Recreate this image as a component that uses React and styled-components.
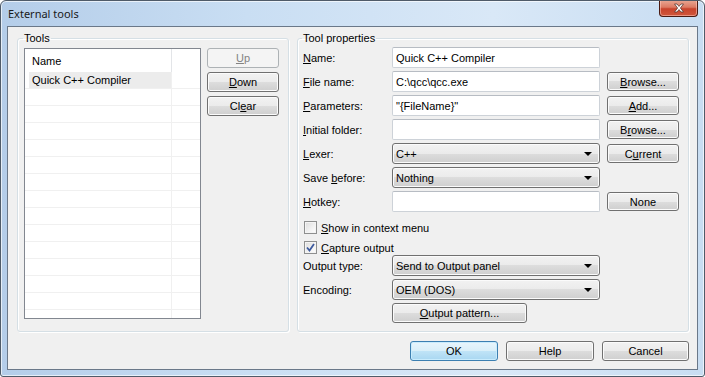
import React from 'react'
import styled, { createGlobalStyle, css } from 'styled-components'

const GlobalStyle = createGlobalStyle`
  html, body {
    margin: 0;
    padding: 0;
    background: #ffffff;
  }
  body {
    font-family: "Liberation Sans", Arial, sans-serif;
    font-size: 11px;
    color: #000;
  }
  #root {
    width: 705px;
    height: 377px;
  }
`

const Window = styled.div`
  width: 705px;
  height: 377px;
  box-sizing: border-box;
  border: 1px solid #4f5b69;
  border-radius: 6px 6px 3px 3px;
  background: linear-gradient(90deg, #b4cde9 0%, #c9def3 35%, #d9e8f7 70%, #c8ddf2 100%);
  box-shadow: inset 0 0 0 1px rgba(255, 255, 255, 0.65);
  display: flex;
  flex-direction: column;
  overflow: hidden;
`

const TitleBar = styled.div`
  height: 25px;
  display: flex;
  align-items: flex-start;
  padding: 0 6px 0 7px;
`

const Title = styled.div`
  flex: 1;
  font-family: "Noto Sans", "Open Sans", sans-serif;
  font-size: 11px;
  line-height: 16px;
  padding-top: 5px;
  color: #1a1a1a;
`

const CloseButton = styled.div`
  width: 39px;
  height: 17px;
  margin-top: -1px;
  box-sizing: border-box;
  border: 1px solid #4a1a12;
  border-top: none;
  border-radius: 0 0 4px 4px;
  background: linear-gradient(#e9a995 0%, #dc7a63 45%, #c8432c 55%, #d0573c 100%);
  box-shadow: inset 0 0 0 1px rgba(255, 200, 190, 0.55);
  display: flex;
  align-items: center;
  justify-content: center;
`

const Client = styled.div`
  flex: 1;
  margin: 0 6px 6px 6px;
  border: 1px solid #6a7889;
  background: #f0f0f0;
  display: flex;
  flex-direction: column;
  padding: 5px 8px 8px 9px;
`

const Groups = styled.div`
  height: 300px;
  display: flex;
  gap: 8px;
`

const GroupBox = styled.fieldset`
  margin: 0;
  box-sizing: border-box;
  width: ${p => p.$width}px;
  min-width: 0;
  border: 1px solid #d5dfe5;
  border-radius: 3px;
  box-shadow: inset 1px 1px 0 #ffffff, 1px 1px 0 #ffffff;
  padding: ${p => p.$pad};
`

const Legend = styled.legend`
  padding: 0 1px;
  margin-left: -1px;
  line-height: 13px;
  font-size: 11px;
`

const ToolsBody = styled.div`
  display: flex;
  gap: 6px;
  align-items: flex-start;
`

const ListBox = styled.div`
  width: 177px;
  height: 271px;
  box-sizing: border-box;
  border: 1px solid #828790;
  background: #ffffff;
  overflow: hidden;
`

const ListRow = styled.div`
  display: grid;
  grid-template-columns: 147px 1fr;
  height: ${p => (p.$header ? 23 : 17)}px;
  box-sizing: border-box;
  border-bottom: ${p => (p.$header ? 'none' : '1px solid #f0f0f0')};
`

const ListCell = styled.div`
  display: flex;
  align-items: center;
  border-right: ${p => (p.$first ? `1px solid ${p.$header ? '#e3e5e8' : '#f0f0f0'}` : 'none')};
  background: ${p => (p.$selected ? '#ececec' : 'transparent')};
  margin-left: ${p => (p.$selected ? 4 : 0)}px;
  padding-left: ${p => (p.$selected ? 3 : p.$first ? 7 : 0)}px;
  white-space: nowrap;
`

const ButtonColumn = styled.div`
  display: flex;
  flex-direction: column;
  gap: 4px;
`

const Button = styled.button`
  box-sizing: border-box;
  width: ${p => p.$w || 72}px;
  height: ${p => p.$h || 20}px;
  padding: 0;
  margin: 0;
  font: inherit;
  color: #000;
  border: 1px solid #707070;
  border-radius: 3px;
  background: linear-gradient(#f2f2f2 0%, #ebebeb 50%, #dddddd 50%, #cfcfcf 100%);
  box-shadow: inset 0 0 0 1px #fbfbfb;
  ${p => p.$disabled && css`
    color: #838383;
    border-color: #adb2b5;
    background: #f4f4f4;
    box-shadow: none;
  `}
  ${p => p.$default && css`
    border-color: #3c7fb1;
    background: linear-gradient(#e8f5fc 0%, #d9eff9 50%, #c0e4f7 50%, #a9d7f1 100%);
    box-shadow: inset 0 0 0 1px #c9ecfd;
  `}
`

const PropsBody = styled.div`
  display: flex;
  flex-direction: column;
`

const FormRow = styled.div`
  display: grid;
  grid-template-columns: 82px 208px 72px;
  column-gap: 7px;
  align-items: center;
  height: ${p => p.$h || 21}px;
  margin-top: ${p => p.$mt ?? 3}px;
`

const Label = styled.span`
  white-space: nowrap;
`

const TextBox = styled.div`
  box-sizing: border-box;
  height: 21px;
  border: 1px solid #cdd2d8;
  border-top-color: #b7bcc3;
  border-radius: 2px;
  background: #ffffff;
  display: flex;
  align-items: center;
  padding-left: 3px;
  white-space: nowrap;
`

const Combo = styled.div`
  box-sizing: border-box;
  height: 21px;
  border: 1px solid #707070;
  border-radius: 3px;
  background: linear-gradient(#f2f2f2 0%, #ebebeb 50%, #dddddd 50%, #cfcfcf 100%);
  box-shadow: inset 0 0 0 1px #fbfbfb;
  display: flex;
  align-items: center;
  justify-content: space-between;
  padding: 0 7px 0 3px;
`

const Arrow = styled.span`
  width: 0;
  height: 0;
  border-left: 4px solid transparent;
  border-right: 4px solid transparent;
  border-top: 4px solid #000;
`

const CheckRow = styled.label`
  display: flex;
  align-items: center;
  gap: 4px;
  height: 13px;
  margin-top: ${p => p.$mt}px;
  padding-left: 1px;
`

const CheckBox = styled.span`
  width: 13px;
  height: 13px;
  box-sizing: border-box;
  border: 1px solid #8e8f8f;
  background: linear-gradient(135deg, #dcdcdc 0%, #f2f2f2 60%, #ffffff 100%);
  box-shadow: inset 0 0 0 1px #f4f4f4;
  display: flex;
  align-items: center;
  justify-content: center;
`

const Footer = styled.div`
  display: flex;
  justify-content: flex-end;
  gap: 8px;
  margin-top: 9px;
`

const Key = ({ children }) => <u>{children}</u>

const CloseGlyph = () => (
  <svg width="12" height="10" viewBox="0 0 12 10">
    <path
      d="M1.5 1 L4 1 L6 3.4 L8 1 L10.5 1 L7.4 5 L10.5 9 L8 9 L6 6.6 L4 9 L1.5 9 L4.6 5 Z"
      fill="#ffffff"
      stroke="#5a3a34"
      strokeWidth="0.8"
      strokeLinejoin="round"
    />
  </svg>
)

const Check = () => (
  <svg width="9" height="9" viewBox="0 0 9 9">
    <path d="M1 4.5 L3.5 7.5 L8 1" fill="none" stroke="#3d5a9e" strokeWidth="1.8" />
  </svg>
)

const rows = Array.from({ length: 15 })

const formRows = [
  { label: <><Key>N</Key>ame:</>, field: <TextBox>Quick C++ Compiler</TextBox>, mt: 0 },
  { label: <><Key>F</Key>ile name:</>, field: <TextBox>C:\qcc\qcc.exe</TextBox>, button: <><Key>B</Key>rowse...</> },
  { label: <><Key>P</Key>arameters:</>, field: <TextBox>"{'{FileName}'}"</TextBox>, button: <><Key>A</Key>dd...</> },
  { label: <><Key>I</Key>nitial folder:</>, field: <TextBox />, button: <>B<Key>r</Key>owse...</> },
  { label: <><Key>L</Key>exer:</>, field: <Combo>C++<Arrow /></Combo>, button: <>C<Key>u</Key>rrent</> },
  { label: <>Save <Key>b</Key>efore:</>, field: <Combo>Nothing<Arrow /></Combo> },
  { label: <><Key>H</Key>otkey:</>, field: <TextBox />, button: 'None' },
]

export default function App() {
  return (
    <>
      <GlobalStyle />
      <Window>
        <TitleBar>
          <Title>External tools</Title>
          <CloseButton>
            <CloseGlyph />
          </CloseButton>
        </TitleBar>
        <Client>
          <Groups>
            <GroupBox $width={272} $pad="3px 8px 0 6px">
              <Legend>Tools</Legend>
              <ToolsBody>
                <ListBox>
                  <ListRow $header>
                    <ListCell $first $header>Name</ListCell>
                    <ListCell />
                  </ListRow>
                  <ListRow>
                    <ListCell $first $selected>Quick C++ Compiler</ListCell>
                    <ListCell />
                  </ListRow>
                  {rows.map((_, i) => (
                    <ListRow key={i}>
                      <ListCell $first />
                      <ListCell />
                    </ListRow>
                  ))}
                </ListBox>
                <ButtonColumn>
                  <Button $disabled><Key>U</Key>p</Button>
                  <Button><Key>D</Key>own</Button>
                  <Button>Cl<Key>e</Key>ar</Button>
                </ButtonColumn>
              </ToolsBody>
            </GroupBox>
            <GroupBox $width={392} $pad="2px 8px 0 5px">
              <Legend>Tool properties</Legend>
              <PropsBody>
                {formRows.map((r, i) => (
                  <FormRow key={i} $mt={r.mt}>
                    <Label>{r.label}</Label>
                    {r.field}
                    {r.button ? <Button $h={19}>{r.button}</Button> : <span />}
                  </FormRow>
                ))}
                <CheckRow $mt={9}>
                  <CheckBox />
                  <span><Key>S</Key>how in context menu</span>
                </CheckRow>
                <CheckRow $mt={7}>
                  <CheckBox><Check /></CheckBox>
                  <span><Key>C</Key>apture output</span>
                </CheckRow>
                <FormRow $mt={1}>
                  <Label>Output type:</Label>
                  <Combo>Send to Output panel<Arrow /></Combo>
                  <span />
                </FormRow>
                <FormRow $mt={3}>
                  <Label>Encoding:</Label>
                  <Combo>OEM (DOS)<Arrow /></Combo>
                  <span />
                </FormRow>
                <FormRow $mt={3} $h={20}>
                  <span />
                  <Button $w={135} $h={20}><Key>O</Key>utput pattern...</Button>
                  <span />
                </FormRow>
              </PropsBody>
            </GroupBox>
          </Groups>
          <Footer>
            <Button $w={88} $default>OK</Button>
            <Button $w={88}>Help</Button>
            <Button $w={87}>Cancel</Button>
          </Footer>
        </Client>
      </Window>
    </>
  )
}
